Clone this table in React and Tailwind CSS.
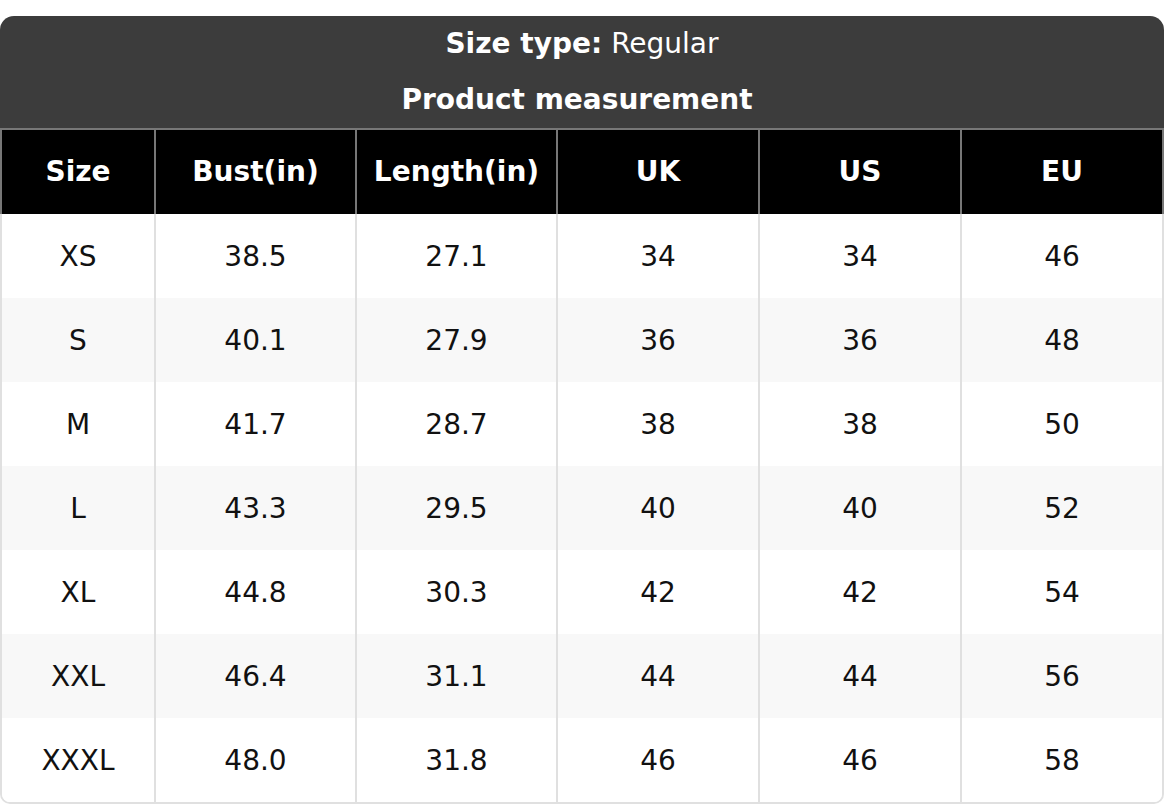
const columns = ['Size', 'Bust(in)', 'Length(in)', 'UK', 'US', 'EU']

const rows = [
  ['XS', '38.5', '27.1', '34', '34', '46'],
  ['S', '40.1', '27.9', '36', '36', '48'],
  ['M', '41.7', '28.7', '38', '38', '50'],
  ['L', '43.3', '29.5', '40', '40', '52'],
  ['XL', '44.8', '30.3', '42', '42', '54'],
  ['XXL', '46.4', '31.1', '44', '44', '56'],
  ['XXXL', '48.0', '31.8', '46', '46', '58'],
]

const grid = 'grid grid-cols-[152px_201px_201px_202px_202px_202px]'

export default function App() {
  return (
    <div className="min-h-screen bg-white pt-[16px] font-['DejaVu_Sans',sans-serif] text-[28px]">
      <div className="rounded-t-[14px] overflow-hidden">
        <div className="bg-[#3c3c3c] text-white text-center">
          <div className="h-[56px] flex items-center justify-center">
            <span className="font-bold">Size type:</span>
            <span className="ml-[9px]">Regular</span>
          </div>
          <div className="h-[56px] flex items-center justify-center pr-[10px] font-bold">
            Product measurement
          </div>
        </div>
        <div className={`${grid} bg-black text-white font-bold border-t-2 border-x-2 border-[#777]`}>
          {columns.map((col, i) => (
            <div
              key={col}
              className={`h-[84px] flex items-center justify-center ${i > 0 ? 'border-l-2 border-[#777]' : ''}`}
            >
              {col}
            </div>
          ))}
        </div>
      </div>
      <div className="border-x-2 border-b-2 border-[#e0e0e0] rounded-b-[10px] overflow-hidden text-[#111]">
        {rows.map((row, r) => (
          <div key={row[0]} className={`${grid} ${r % 2 === 1 ? 'bg-[#f8f8f8]' : 'bg-white'}`}>
            {row.map((cell, i) => (
              <div
                key={i}
                className={`h-[84px] pt-[2px] flex items-center justify-center ${i > 0 ? 'border-l-2 border-[#e0e0e0]' : ''}`}
              >
                {cell}
              </div>
            ))}
          </div>
        ))}
      </div>
    </div>
  )
}
